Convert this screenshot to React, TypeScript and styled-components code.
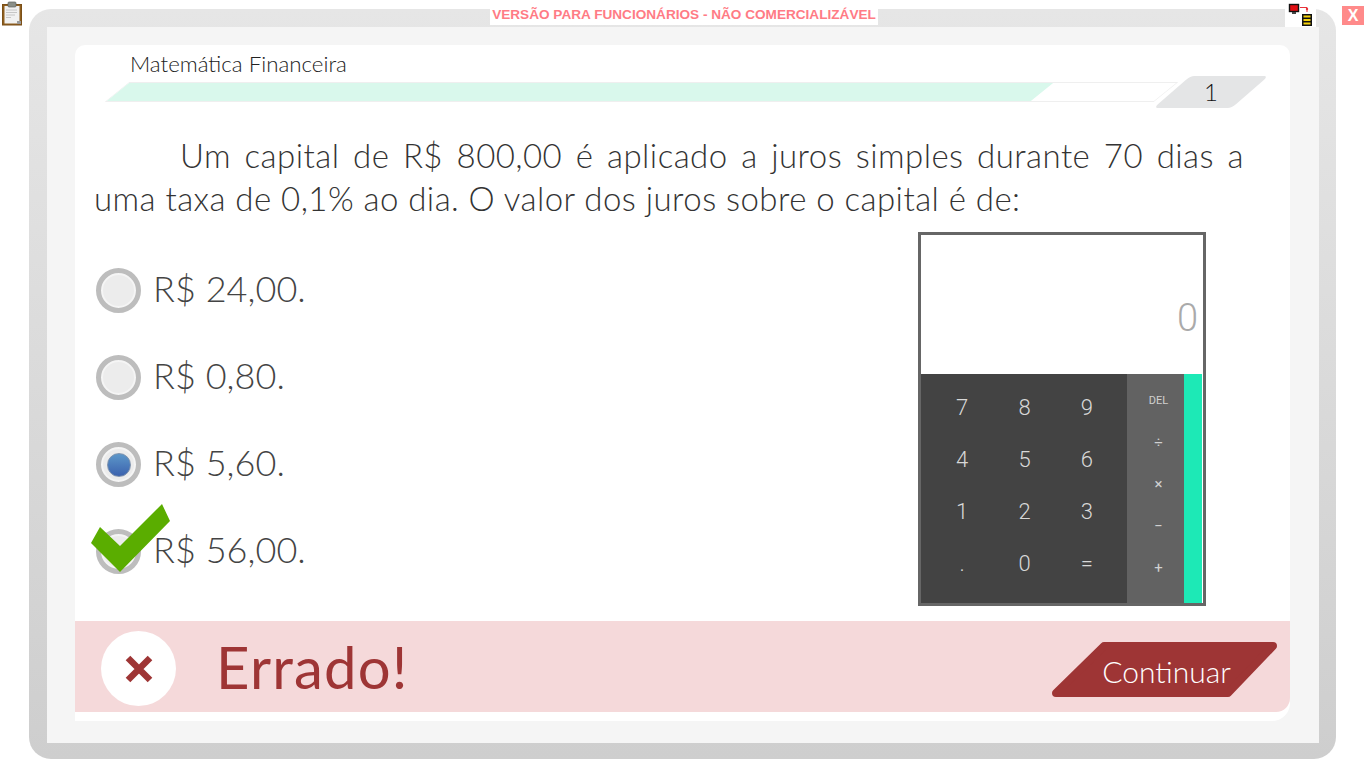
import styled, { createGlobalStyle } from "styled-components";

const GlobalStyle = createGlobalStyle`
  html, body {
    margin: 0;
    padding: 0;
    background: #fff;
    overflow: hidden;
  }
  * { box-sizing: border-box; }
`;

const Page = styled.div`
  position: relative;
  width: 1366px;
  height: 768px;
  padding: 9px 30px 9px 29px;
  font-family: "Lato", "Liberation Sans", sans-serif;
  font-weight: 300;
`;

const Frame = styled.div`
  height: 750px;
  padding: 18px 17px 16px 18px;
  border-radius: 22px;
  background: linear-gradient(to bottom, #e6e6e6, #cecece);
`;

const Inner = styled.div`
  height: 100%;
  padding: 18px 29px 22px 28px;
  background: #f5f5f5;
`;

const Card = styled.div`
  height: 100%;
  background: #fff;
  border-radius: 10px 10px 18px 0;
  display: flex;
  flex-direction: column;
`;

const Header = styled.div`
  position: relative;
  height: 89px;
  padding: 5px 0 0 55px;
`;

const Subject = styled.div`
  font-size: 22.3px;
  line-height: 28px;
  color: #222;
`;

const Track = styled.div`
  position: absolute;
  left: 42px;
  top: 37px;
  width: 1049px;
  height: 20px;
  transform: skewX(-51deg);
  border: 1px solid #efefef;
  background: #fff;
`;

const TrackFill = styled.div`
  height: 100%;
  background: #d9f8ec;
`;

const Badge = styled.div`
  position: absolute;
  left: 1097px;
  top: 31px;
  width: 78px;
  height: 32px;
  border-radius: 4px;
  transform: skewX(-49deg);
  background: #e4e5e6;
`;

const BadgeNumber = styled.div`
  position: absolute;
  left: 1099px;
  top: 31px;
  width: 74px;
  height: 32px;
  text-align: center;
  font-size: 24px;
  line-height: 32px;
  color: #111;
`;

const Question = styled.p`
  margin: 0;
  padding: 0 46px 0 19px;
  font-size: 33px;
  line-height: 43px;
  letter-spacing: 0.45px;
  color: #333;
  text-align: justify;
  text-indent: 86px;
`;

const Body = styled.div`
  flex: 1;
  display: flex;
  justify-content: space-between;
  padding: 12px 84px 0 21px;
`;

const Options = styled.div`
  display: flex;
  flex-direction: column;
  padding-top: 15px;
`;

const Option = styled.div`
  position: relative;
  display: flex;
  align-items: center;
  gap: 12px;
  height: 87px;
`;

const Radio = styled.div`
  width: 45px;
  height: 45px;
  border-radius: 50%;
  border: 5px solid #bdbdbd;
  background: #ececec;
  box-shadow: inset 0 0 0 2px #f5f5f5;
  display: flex;
  align-items: center;
  justify-content: center;
`;

const RadioDot = styled.div`
  width: 24px;
  height: 24px;
  border-radius: 50%;
  border: 1px solid #7f93ae;
  background: linear-gradient(to bottom, #5c97c9, #3b62ae);
`;

const OptionText = styled.span`
  padding-bottom: 5px;
  font-size: 36px;
  letter-spacing: 0.05px;
  color: #444;
`;

const CheckMark = styled.svg`
  position: absolute;
  left: -5px;
  top: -4px;
  width: 80px;
  height: 70px;
`;

const Calculator = styled.div`
  width: 288px;
  height: 374px;
  border: 3px solid #666;
  display: flex;
  flex-direction: column;
  font-family: "Roboto", sans-serif;
  font-weight: 300;
`;

const Display = styled.div`
  flex: 0 0 139px;
  padding: 0 5px 35px 0;
  background: #fff;
  display: flex;
  align-items: flex-end;
  justify-content: flex-end;
  font-size: 38px;
  line-height: 42px;
  color: #aaa;
`;

const Keypad = styled.div`
  flex: 1;
  display: flex;
  background: #fff;
`;

const Digits = styled.div`
  width: 206px;
  padding: 7px 9px 13px 10px;
  background: #434343;
  display: grid;
  grid-template-columns: repeat(3, 1fr);
  grid-template-rows: repeat(4, 52px);
  align-items: center;
  justify-items: center;
`;

const DigitKey = styled.span`
  font-size: 22px;
  color: #d8d8d8;
`;

const Operators = styled.div`
  width: 57px;
  padding: 5px 0 14px 6px;
  background: #626262;
  display: grid;
  grid-template-rows: repeat(5, 42px);
  align-items: center;
  justify-items: center;
`;

const OperatorKey = styled.span<{ $small?: boolean }>`
  font-size: ${(props) => (props.$small ? "11px" : "15px")};
  font-weight: 400;
  color: #d0d0d0;
`;

const Accent = styled.div`
  width: 18px;
  background: #1de9b6;
`;

const Feedback = styled.div`
  height: 91px;
  margin-bottom: 9px;
  padding: 4px 13px 0 26px;
  background: #f5d9da;
  border-radius: 0 0 14px 0;
  display: flex;
  align-items: center;
`;

const ResultCircle = styled.div`
  width: 75px;
  height: 75px;
  border-radius: 50%;
  background: #fff;
  display: flex;
  align-items: center;
  justify-content: center;
`;

const ResultText = styled.div`
  margin: 0 0 4px 40px;
  flex: 1;
  font-size: 58px;
  font-weight: 400;
  color: #9e3535;
  letter-spacing: 1.2px;
`;

const ContinueButton = styled.button`
  position: relative;
  width: 225px;
  height: 55px;
  margin-top: 2px;
  padding: 0;
  border: 0;
  background: transparent;
  font-family: inherit;
  font-weight: 300;
  font-size: 30px;
  color: #fff;
`;

const ContinueShape = styled.svg`
  position: absolute;
  left: 0;
  top: 0;
  width: 225px;
  height: 55px;
`;

const ContinueLabel = styled.span`
  position: relative;
  display: block;
  margin-left: 4px;
  padding-top: 2px;
`;

const ClipboardIcon = styled.svg`
  position: absolute;
  left: 1px;
  top: 1px;
  width: 22px;
  height: 25px;
`;

const Watermark = styled.div`
  position: absolute;
  left: 490px;
  top: 7px;
  width: 388px;
  height: 18px;
  background: #fff;
  text-align: center;
  font-family: "Liberation Sans", sans-serif;
  font-size: 13.6px;
  line-height: 16px;
  font-weight: 700;
  color: #ff7b85;
  white-space: nowrap;
`;

const NetworkBox = styled.div`
  position: absolute;
  left: 1285px;
  top: 0;
  width: 31px;
  height: 27px;
  background: #fff;
`;

const NetworkIcon = styled.svg`
  display: block;
  overflow: visible;
`;

const CloseButton = styled.div`
  position: absolute;
  left: 1342px;
  top: 6px;
  width: 22px;
  height: 19px;
  background: #ff8a8a;
  color: #fff;
  font-family: "Liberation Sans", sans-serif;
  font-size: 16px;
  font-weight: 700;
  line-height: 19px;
  text-align: center;
`;

const optionsList = ["R$ 24,00.", "R$ 0,80.", "R$ 5,60.", "R$ 56,00."];
const digits = ["7", "8", "9", "4", "5", "6", "1", "2", "3", ".", "0", "="];
const operators = ["DEL", "÷", "×", "−", "+"];

export default function App() {
  return (
    <>
      <GlobalStyle />
      <Page>
        <Frame>
          <Inner>
            <Card>
              <Header>
                <Subject>Matemática Financeira</Subject>
                <Track>
                  <TrackFill style={{ width: `${(926 / 1049) * 100}%` }} />
                </Track>
                <Badge />
                <BadgeNumber>1</BadgeNumber>
              </Header>
              <Question>
                Um capital de R$ 800,00 é aplicado a juros simples durante 70 dias a uma taxa de 0,1% ao dia. O valor
                dos juros sobre o capital é de:
              </Question>
              <Body>
                <Options>
                  {optionsList.map((text, i) => (
                    <Option key={text}>
                      <Radio>{i === 2 && <RadioDot />}</Radio>
                      <OptionText>{text}</OptionText>
                      {i === 3 && (
                        <CheckMark viewBox="0 0 80 70">
                          <path d="M0 39 L9 23 L29 42 L71 0 L79 17 L29 68 Z" fill="#5aad00" />
                        </CheckMark>
                      )}
                    </Option>
                  ))}
                </Options>
                <Calculator>
                  <Display>0</Display>
                  <Keypad>
                    <Digits>
                      {digits.map((d) => (
                        <DigitKey key={d}>{d}</DigitKey>
                      ))}
                    </Digits>
                    <Operators>
                      {operators.map((o) => (
                        <OperatorKey key={o} $small={o === "DEL"}>
                          {o}
                        </OperatorKey>
                      ))}
                    </Operators>
                    <Accent />
                  </Keypad>
                </Calculator>
              </Body>
              <Feedback>
                <ResultCircle>
                  <svg width="30" height="30" viewBox="0 0 30 30">
                    <path d="M4 4 L26 26 M26 4 L4 26" stroke="#9e3535" strokeWidth="6.5" />
                  </svg>
                </ResultCircle>
                <ResultText>Errado!</ResultText>
                <ContinueButton>
                  <ContinueShape viewBox="0 0 225 55">
                    <path
                      d="M52 4 H221 L176 51 H4 Z"
                      fill="#9e3535"
                      stroke="#9e3535"
                      strokeWidth="8"
                      strokeLinejoin="round"
                    />
                  </ContinueShape>
                  <ContinueLabel>Continuar</ContinueLabel>
                </ContinueButton>
              </Feedback>
            </Card>
          </Inner>
        </Frame>

        <ClipboardIcon viewBox="0 0 22 25">
          <rect x="1.5" y="3.5" width="19" height="20.5" fill="#8f5f1e" stroke="#7a4f18" />
          <rect x="3.5" y="5" width="15" height="17.5" fill="#f1f1f1" />
          <path d="M5 9 H16 M5 11.5 H16 M5 14 H14 M5 16.5 H10" stroke="#c6c6c6" strokeWidth="1" />
          <rect x="7" y="1" width="8" height="5" rx="1" fill="#8a8f88" stroke="#5f635e" strokeWidth="0.7" />
          <rect x="16" y="20" width="4" height="3" fill="#999" />
        </ClipboardIcon>
        <Watermark>VERSÃO PARA FUNCIONÁRIOS - NÃO COMERCIALIZÁVEL</Watermark>
        <NetworkBox>
          <NetworkIcon width="31" height="27" viewBox="0 0 31 27">
            <rect x="4.5" y="4.5" width="9" height="7" fill="#e00d12" stroke="#111" strokeWidth="1.4" />
            <rect x="7" y="12" width="4" height="2" fill="#444" />
            <path d="M15 7.5 H22 V12" stroke="#e8333a" strokeWidth="1" fill="none" />
            <circle cx="22" cy="9" r="1.2" fill="#e8333a" />
            <rect x="17" y="14" width="10" height="12" fill="#111" />
            <path d="M18.5 16.5 H25.5 M18.5 20 H25.5 M18.5 23.5 H25.5" stroke="#f5d20a" strokeWidth="2" />
          </NetworkIcon>
        </NetworkBox>
        <CloseButton>X</CloseButton>
      </Page>
    </>
  );
}
